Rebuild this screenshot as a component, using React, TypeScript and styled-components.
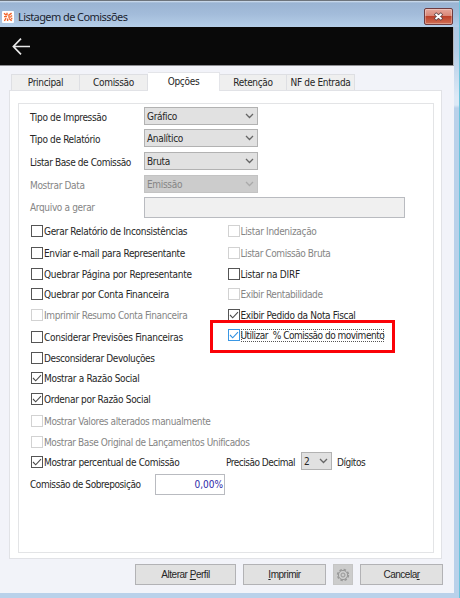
import React from "react";
import styled, { createGlobalStyle, css } from "styled-components";

const GlobalStyle = createGlobalStyle`
  *, *::before, *::after { box-sizing: border-box; }
  body {
    margin: 0;
    overflow: hidden;
    font-family: "DejaVu Sans Condensed", "DejaVu Sans", sans-serif;
    font-stretch: condensed;
    font-size: 10px;
    line-height: 12px;
    letter-spacing: -0.32px;
    color: #262626;
    white-space: pre;
  }
`;

const Window = styled.div`
  width: 460px;
  height: 598px;
  display: flex;
  flex-direction: column;
  background: linear-gradient(#a9c2de 0, #b5cde7 50px, #dce9f6 96px, #dce9f6 104px, #b9d1ea 107px);
  border-top: 1px solid #6d747c;
  border-right: 1px solid #6cc4dc;
`;

const TitleBar = styled.header`
  height: 26px;
  flex: none;
  display: flex;
  align-items: center;
  padding: 5px 6px 0 2px;
  background: linear-gradient(#d5e2f0 0, #9ab4d3 2px, #a3bcda 50%, #b5cee8 100%);
`;

const AppIcon = styled.svg`
  width: 12px;
  height: 12px;
  flex: none;
`;

const Title = styled.h1`
  margin: 0 auto 0 4px;
  font-family: "Noto Sans", sans-serif;
  font-size: 11px;
  font-weight: 400;
  letter-spacing: -0.57px;
  color: #1c2430;
`;

const CloseButton = styled.button`
  width: 29px;
  height: 17px;
  padding: 0;
  display: grid;
  place-items: center;
  border: 1px solid #6f3b3f;
  border-radius: 2px;
  background: linear-gradient(#e6a79c 0, #d98777 45%, #bd4029 50%, #cf6f55 100%);
  box-shadow: inset 0 0 0 1px rgba(255, 255, 255, 0.3);
`;

const Client = styled.main`
  flex: 1;
  margin-right: 5px;
  display: flex;
  flex-direction: column;
  background: #f2f3f9;
  border-bottom: 5px solid #b9d1ea;
`;

const NavBar = styled.nav`
  height: 39px;
  flex: none;
  padding: 11px 12px;
  background: #090909;
  border-right: 1px solid #b4b6bb;
  border-bottom: 1px solid #8c8c90;
`;

const TabStrip = styled.div`
  height: 24px;
  flex: none;
  display: flex;
  align-items: flex-end;
  padding-left: 11px;
`;

const Tab = styled.div<{ $width: number; $active?: boolean }>`
  width: ${(p) => p.$width}px;
  height: 16px;
  display: flex;
  align-items: center;
  justify-content: center;
  padding-top: 1px;
  background: #efefef;
  border: 1px solid #dedfe3;
  border-width: 1px 1px 0 0;
  &:first-child { border-left-width: 1px; }
  ${(p) =>
    p.$active &&
    css`
      height: 19px;
      margin-bottom: -1px;
      padding: 0 0 1px;
      background: #fff;
      border-color: #e4e5e9;
      z-index: 1;
    `}
`;

const TabPage = styled.section`
  width: 433px;
  height: 469px;
  flex: none;
  margin-left: 9px;
  padding: 12px 7px 5px 8px;
  background: #fff;
  border: 1px solid #e1e2e6;
`;

const Group = styled.div`
  height: 450px;
  padding: 3px 0 0 11px;
  border: 1px solid #e3e4e6;
`;

const Field = styled.div<{ $height: number }>`
  height: ${(p) => p.$height}px;
  display: flex;
  align-items: flex-start;
`;

const Label = styled.span<{ $width?: number; $disabled?: boolean; $track?: number }>`
  width: ${(p) => (p.$width ? `${p.$width}px` : "auto")};
  padding-top: 5px;
  flex: none;
  letter-spacing: ${(p) => p.$track ?? -0.34}px;
  color: ${(p) => (p.$disabled ? "#858585" : "inherit")};
`;

const ComboBox = styled.div<{ $width: number; $disabled?: boolean }>`
  width: ${(p) => p.$width}px;
  height: 18px;
  margin-right: 5px;
  flex: none;
  display: flex;
  align-items: center;
  justify-content: space-between;
  padding: 1px 3px 0 2px;
  border: 1px solid ${(p) => (p.$disabled ? "#c3c3c3" : "#b2b2b2")};
  background: ${(p) => (p.$disabled ? "#cccccc" : "#e1e1e1")};
  color: ${(p) => (p.$disabled ? "#858585" : "inherit")};
`;

const TextBox = styled.div<{ $width: number; $disabled?: boolean }>`
  width: ${(p) => p.$width}px;
  height: 21px;
  padding: 4px 1px;
  text-align: right;
  letter-spacing: 0;
  color: #2a1fa8;
  border: 1px solid #b9bbc0;
  background: ${(p) => (p.$disabled ? "#f0f0f0" : "#fff")};
`;

const Options = styled.div`
  display: grid;
  grid-template-columns: 196.5px 1fr;
  grid-template-rows: 22px 21px 20px 21px 22px 21px 20px 21px 22px 21px 16px;
  padding-left: 1px;
`;

const CheckRow = styled.div<{ $disabled?: boolean; $col: number; $row: number }>`
  grid-column: ${(p) => p.$col};
  grid-row: ${(p) => p.$row};
  height: 12px;
  display: flex;
  align-items: center;
  gap: 1px;
  color: ${(p) => (p.$disabled ? "#858585" : "inherit")};
`;

const Box = styled.span<{ $disabled?: boolean; $focused?: boolean }>`
  width: 12px;
  height: 12px;
  flex: none;
  display: grid;
  place-items: center;
  color: ${(p) => (p.$focused ? "#2f8fe0" : "#4a4a4a")};
  border: 1px solid ${(p) => (p.$disabled ? "#d2d2d2" : p.$focused ? "#3a97e4" : "#555")};
`;

const CheckText = styled.span<{ $track?: number; $focused?: boolean }>`
  padding-top: 1px;
  letter-spacing: ${(p) => p.$track ?? -0.32}px;
  ${(p) => p.$focused && "outline: 1px dotted #555; outline-offset: -1px;"}
`;

const Highlight = styled.div`
  grid-column: 2;
  grid-row: 6;
  width: 185px;
  height: 33px;
  margin: -11px 0 0 -18px;
  padding: 6px 0 0 15px;
  border: 3px solid #fb0207;
`;

const BottomRow = styled.div`
  display: flex;
  height: 22px;
  padding-left: 1px;
`;

const PercentCell = styled.div`
  width: 195px;
  padding-top: 4px;
`;

const Footer = styled.footer`
  display: flex;
  gap: 7px;
  padding: 5px 0 0 135px;
`;

const Button = styled.button<{ $width: number; $disabled?: boolean }>`
  width: ${(p) => p.$width}px;
  height: 21px;
  padding: 0;
  display: grid;
  place-items: center;
  font: 10px/12px "Liberation Sans", sans-serif;
  letter-spacing: -0.48px;
  color: #262626;
  background: ${(p) => (p.$disabled ? "#cccccc" : "#e1e1e1")};
  border: 1px solid ${(p) => (p.$disabled ? "#c5c5c5" : "#b2b2b5")};
`;

const Chevron = ({ disabled = false }: { disabled?: boolean }) => (
  <svg width="9" height="7" viewBox="0 0 9 7" fill="none" stroke={disabled ? "#aaa" : "#666"} strokeWidth="1.3">
    <path d="M1 1 4.5 4.5 8 1" />
  </svg>
);

interface OptionProps {
  text: string;
  col?: number;
  row?: number;
  checked?: boolean;
  disabled?: boolean;
  focused?: boolean;
  track?: number;
}

const Option = ({ text, col = 1, row = 1, checked, disabled, focused, track }: OptionProps) => (
  <CheckRow $col={col} $row={row} $disabled={disabled}>
    <Box $disabled={disabled} $focused={focused}>
      {checked && (
        <svg width="10" height="10" viewBox="0 0 10 10" fill="none" stroke="currentColor" strokeWidth="1.1">
          <path d="M1 5 3.7 7.8 9 2.2" />
        </svg>
      )}
    </Box>
    <CheckText $track={track} $focused={focused}>{text}</CheckText>
  </CheckRow>
);

const leftOptions: OptionProps[] = [
  { text: "Gerar Relatório de Inconsistências" },
  { text: "Enviar e-mail para Representante" },
  { text: "Quebrar Página por Representante", track: -0.26 },
  { text: "Quebrar por Conta Financeira", track: -0.29 },
  { text: "Imprimir Resumo Conta Financeira", disabled: true, track: -0.38 },
  { text: "Considerar Previsões Financeiras", track: -0.28 },
  { text: "Desconsiderar Devoluções", track: -0.38 },
  { text: "Mostrar a Razão Social", checked: true },
  { text: "Ordenar por Razão Social", checked: true },
  { text: "Mostrar Valores alterados manualmente", disabled: true, track: -0.38 },
  { text: "Mostrar Base Original de Lançamentos Unificados", disabled: true, track: -0.4 },
];

const rightOptions: OptionProps[] = [
  { text: "Listar Indenização", disabled: true },
  { text: "Listar Comissão Bruta", disabled: true, track: -0.42 },
  { text: "Listar na DIRF", track: -0.25 },
  { text: "Exibir Rentabilidade", disabled: true, track: -0.4 },
  { text: "Exibir Pedido da Nota Fiscal", checked: true },
];

const combos = [
  { label: "Tipo de Impressão", value: "Gráfico", height: 22 },
  { label: "Tipo de Relatório", value: "Analítico", height: 23 },
  { label: "Listar Base de Comissão", value: "Bruta", height: 23, track: -0.4 },
  { label: "Mostrar Data", value: "Emissão", height: 22, disabled: true },
];

const tabs = [
  { text: "Principal", width: 69 },
  { text: "Comissão", width: 68 },
  { text: "Opções", width: 72, active: true },
  { text: "Retenção", width: 67 },
  { text: "NF de Entrada", width: 68 },
];

export default function App() {
  return (
    <>
      <GlobalStyle />
      <Window>
        <TitleBar>
          <AppIcon viewBox="0 0 12 12">
            <rect width="12" height="12" rx="1" fill="#fff" />
            <g fill="none" stroke="#f2642a" strokeWidth="1.4">
              <path d="M2 2.2 4.2 4.2M5 1.8v2.6M6.3 4.6 9.6 2.1M9.5 4.2v1.6M2 5.6h3M6.2 6h2.6M2.4 10 4 7.2M5.6 10V7.5M7 7.5 9.7 9.8M9.7 6.8v1.4" />
            </g>
          </AppIcon>
          <Title>Listagem de Comissões</Title>
          <CloseButton aria-label="Fechar">
            <svg width="11" height="9" viewBox="0 0 11 9">
              <path d="M2 1.5 9 7.5M9 1.5 2 7.5" stroke="#5d4448" strokeWidth="3.6" />
              <path d="M2.5 2 8.5 7M8.5 2 2.5 7" stroke="#fff" strokeWidth="2" />
            </svg>
          </CloseButton>
        </TitleBar>
        <Client>
          <NavBar>
            <svg width="18" height="17" viewBox="0 0 18 17" fill="none" stroke="#e8e8e8" strokeWidth="1.7">
              <path d="M18 8.5H1.4M9 .7 1.4 8.5 9 16.3" />
            </svg>
          </NavBar>
          <TabStrip>
            {tabs.map((t) => (
              <Tab key={t.text} $width={t.width} $active={t.active}>{t.text}</Tab>
            ))}
          </TabStrip>
          <TabPage>
            <Group>
              {combos.map((c) => (
                <Field key={c.label} $height={c.height}>
                  <Label $width={114} $disabled={c.disabled} $track={c.track}>{c.label}</Label>
                  <ComboBox $width={114} $disabled={c.disabled}>
                    {c.value}
                    <Chevron disabled={c.disabled} />
                  </ComboBox>
                </Field>
              ))}
              <Field $height={28}>
                <Label $width={114} $disabled>Arquivo a gerar</Label>
                <TextBox $width={261} $disabled />
              </Field>
              <Options>
                {leftOptions.map((o, i) => (
                  <Option key={o.text} {...o} col={1} row={i + 1} />
                ))}
                {rightOptions.map((o, i) => (
                  <Option key={o.text} {...o} col={2} row={i + 1} />
                ))}
                <Highlight>
                  <Option text="Utilizar  % Comissão do movimento" checked focused track={-0.5} />
                </Highlight>
              </Options>
              <BottomRow>
                <PercentCell>
                  <Option text="Mostrar percentual de Comissão" checked track={-0.35} />
                </PercentCell>
                <Label $width={75} $track={-0.5}>Precisão Decimal</Label>
                <ComboBox $width={31}>
                  2
                  <Chevron />
                </ComboBox>
                <Label $track={-0.45}>Dígitos</Label>
              </BottomRow>
              <Field $height={21}>
                <Label $width={125} $track={-0.42}>Comissão de Sobreposição</Label>
                <TextBox $width={70}>0,00%</TextBox>
              </Field>
            </Group>
          </TabPage>
          <Footer>
            <Button $width={101}><span>Alterar <u>P</u>erfil</span></Button>
            <Button $width={83}><span><u>I</u>mprimir</span></Button>
            <Button $width={20} $disabled aria-label="Configurações">
              <svg width="14" height="14" viewBox="0 0 14 14" fill="none" stroke="#999">
                <circle cx="7" cy="7" r="5.4" strokeWidth="1.6" strokeDasharray="2.4 1.84" />
                <circle cx="7" cy="7" r="4.6" />
                <circle cx="7" cy="7" r="2" />
              </svg>
            </Button>
            <Button $width={83}><span>Cancela<u>r</u></span></Button>
          </Footer>
        </Client>
      </Window>
    </>
  );
}
